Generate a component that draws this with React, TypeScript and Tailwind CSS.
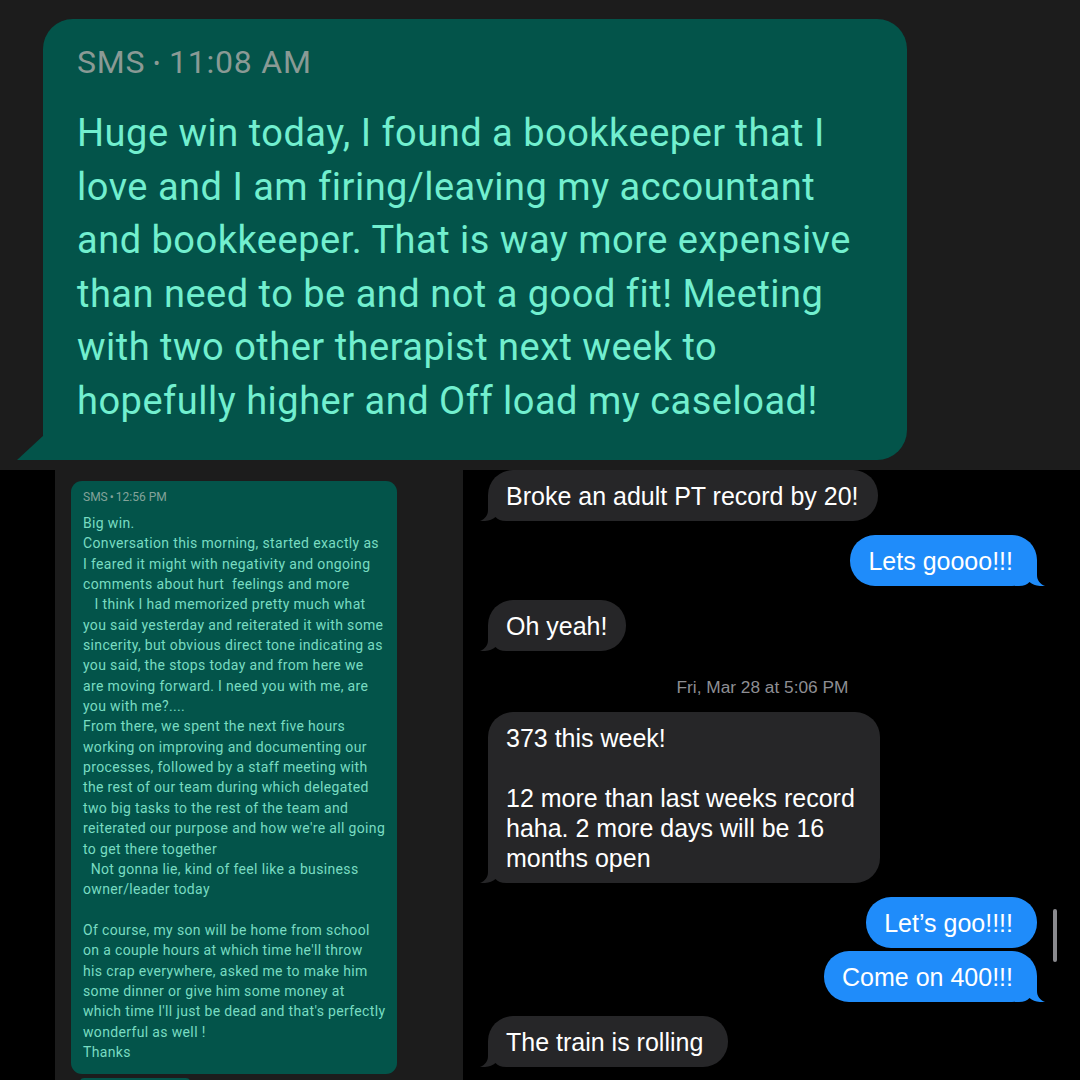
import React from 'react';

const topLines = [
  'Huge win today, I found a bookkeeper that I',
  'love and I am firing/leaving my accountant',
  'and bookkeeper. That is way more expensive',
  'than need to be and not a good fit! Meeting',
  'with two other therapist next week to',
  'hopefully higher and Off load my caseload!',
];

const cardLines = [
  'Big win.',
  'Conversation this morning, started exactly as',
  'I feared it might with negativity and ongoing',
  'comments about hurt  feelings and more',
  '   I think I had memorized pretty much what',
  'you said yesterday and reiterated it with some',
  'sincerity, but obvious direct tone indicating as',
  'you said, the stops today and from here we',
  'are moving forward. I need you with me, are',
  'you with me?....',
  'From there, we spent the next five hours',
  'working on improving and documenting our',
  'processes, followed by a staff meeting with',
  'the rest of our team during which delegated',
  'two big tasks to the rest of the team and',
  "reiterated our purpose and how we're all going",
  'to get there together',
  '  Not gonna lie, kind of feel like a business',
  'owner/leader today',
  '',
  'Of course, my son will be home from school',
  "on a couple hours at which time he'll throw",
  'his crap everywhere, asked me to make him',
  'some dinner or give him some money at',
  "which time I'll just be dead and that's perfectly",
  'wonderful as well !',
  'Thanks',
];

// iOS style bubble tail, drawn for the left side; mirrored for the right
const Tail: React.FC<{ side: 'left' | 'right'; color: string }> = ({ side, color }) => (
  <svg
    width="30"
    height="26"
    viewBox="0 0 30 26"
    className={
      side === 'left'
        ? 'absolute bottom-0 left-[-8px]'
        : 'absolute bottom-0 right-[-8px] -scale-x-100'
    }
  >
    <path
      d="M8 0 L8 15 C8 20.5 5 24 0 26 C7 26.5 12 25 15.5 22 C18 24.5 21 26 26 26 L30 26 L30 0 Z"
      fill={color}
    />
  </svg>
);

const Gray: React.FC<{ children: React.ReactNode; tail?: boolean; className?: string }> = ({
  children,
  tail,
  className = '',
}) => (
  <div
    className={`relative self-start bg-[#262628] text-white rounded-[25px] pl-[18px] pr-[19px] py-[10.5px] leading-[30px] text-[25px] ${className}`}
  >
    {tail && <Tail side="left" color="#262628" />}
    <div className="relative">{children}</div>
  </div>
);

const Blue: React.FC<{ children: React.ReactNode; tail?: boolean; className?: string }> = ({
  children,
  tail,
  className = '',
}) => (
  <div
    className={`relative self-end bg-[#1f8cfa] text-white rounded-[25px] pl-[18px] pr-[24px] py-[10.5px] leading-[30px] text-[25px] ${className}`}
  >
    {tail && <Tail side="right" color="#1f8cfa" />}
    <div className="relative">{children}</div>
  </div>
);

export default function App() {
  return (
    <div className="w-[1080px] h-[1080px] overflow-hidden bg-black">
      {/* top screenshot */}
      <div className="h-[470px] bg-[#1c1c1c] pt-[19px] pl-[43px] font-['Roboto',sans-serif]">
        <div className="relative w-[864px] h-[441px] bg-[#03544a] rounded-[30px] rounded-bl-none pt-[25px] px-[34px]">
          <div className="text-[32px] leading-[36px] text-[#8a9a95] tracking-[0.8px]">
            SMS<span className="mx-[8px] text-[20px] align-[3px]">•</span>11:08 AM
          </div>
          <div className="mt-[26px] text-[38px] leading-[53.6px] text-[#72efcf] tracking-[0.5px]">
            {topLines.map((l, i) => (
              <div key={i} className="whitespace-pre">{l}</div>
            ))}
          </div>
          <svg width="27" height="25" viewBox="0 0 27 25" className="absolute bottom-0 left-[-26px]">
            <polygon points="27,0 0,25 27,25" fill="#03544a" />
          </svg>
        </div>
      </div>

      <div className="flex h-[610px]">
        <div className="w-[55px] bg-black" />

        {/* left screenshot */}
        <div className="w-[408px] bg-[#1c1c1c] pt-[11px] pl-[16px] font-['Roboto',sans-serif]">
          <div className="w-[326px] h-[593px] bg-[#03544a] rounded-[11px] pt-[8px] px-[12px]">
            <div className="text-[12px] leading-[16px] text-[#84a39a]">
              SMS<span className="mx-[2px]">•</span>12:56 PM
            </div>
            <div className="mt-[8px] text-[14px] leading-[20.35px] text-[#79dcc2] tracking-[0.35px]">
              {cardLines.map((l, i) => (
                <div key={i} className="whitespace-pre h-[20.35px]">{l}</div>
              ))}
            </div>
          </div>
          <div className="ml-[9px] mt-[4px] w-[110px] h-[4px] bg-[#03544a] rounded-t-[4px]" />
        </div>

        {/* right screenshot */}
        <div className="relative flex-1 bg-black pl-[25px] pr-[43px] flex flex-col font-['Liberation_Sans',Arial,sans-serif]">
          <Gray tail className="py-[9.5px]">Broke an adult PT record by 20!</Gray>
          <Blue tail className="mt-[14px]">Lets goooo!!!</Blue>
          <Gray tail className="mt-[14px]">Oh yeah!</Gray>
          <div className="mt-[26px] text-center text-[17.3px] leading-[20px] text-[#8e8e93]">
            Fri, Mar 28 at 5:06 PM
          </div>
          <Gray tail className="mt-[15px] w-[392px]">
            <div>373 this week!</div>
            <div className="h-[30px]" />
            <div>12 more than last weeks record</div>
            <div>haha. 2 more days will be 16</div>
            <div>months open</div>
          </Gray>
          <Blue className="mt-[14px]">Let’s goo!!!!</Blue>
          <Blue tail className="mt-[3px]">Come on 400!!!</Blue>
          <Gray tail className="mt-[14px] pr-[25px]">The train is rolling</Gray>
          <div className="absolute left-[590px] top-[439px] w-[4px] h-[53px] rounded-full bg-[#8a8a8e]" />
        </div>
      </div>
    </div>
  );
}
